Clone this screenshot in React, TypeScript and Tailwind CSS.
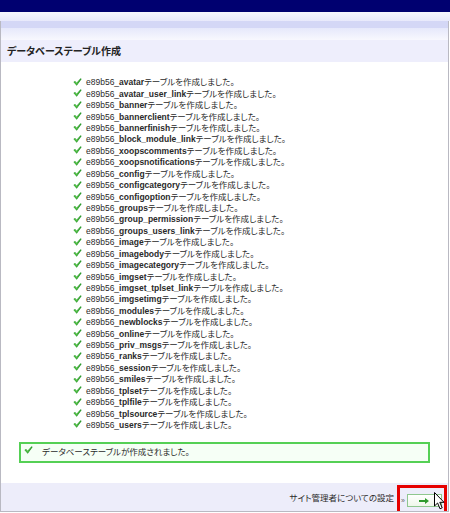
import React from "react";

const tables = [
  "avatar",
  "avatar_user_link",
  "banner",
  "bannerclient",
  "bannerfinish",
  "block_module_link",
  "xoopscomments",
  "xoopsnotifications",
  "config",
  "configcategory",
  "configoption",
  "groups",
  "group_permission",
  "groups_users_link",
  "image",
  "imagebody",
  "imagecategory",
  "imgset",
  "imgset_tplset_link",
  "imgsetimg",
  "modules",
  "newblocks",
  "online",
  "priv_msgs",
  "ranks",
  "session",
  "smiles",
  "tplset",
  "tplfile",
  "tplsource",
  "users",
];

function Check({ className }: { className?: string }) {
  return (
    <svg viewBox="0 0 10 9" className={className}>
      <path d="M0.4 4.4 L2.3 3.3 L3.9 5.4 L8.5 0.3 L9.7 1.1 L4.1 8.6 Z" fill="#27942a" />
      <path d="M1.1 4.6 L2.2 4 L3.9 6.2 L8.7 0.9 L4.1 7.7 Z" fill="#62d04e" />
    </svg>
  );
}

function Cursor() {
  return (
    <svg viewBox="0 0 11 18" className="w-[11px] h-[18px]">
      <path d="M0.5 0.5 L0.5 14 L3.6 11 L6 16.8 L8.2 15.8 L5.8 10.3 L10 10.3 Z" fill="#fff" stroke="#000" strokeWidth="1" />
    </svg>
  );
}

export default function App() {
  return (
    <div className="w-[450px] h-[513px] bg-white overflow-hidden text-[#2a2a2a] font-['Liberation_Sans','Noto_Sans_CJK_JP',sans-serif] [font-feature-settings:'palt']">
      {/* top band */}
      <div className="h-[12px] bg-[#000070]" />
      <div className="h-[9px] bg-gradient-to-b from-[#f6f6fe] to-[#e8e9fb]" />

      <div className="w-[449px] border-l border-r border-b border-[#b9b9c2]">
        <div className="h-[7px] bg-[#d4d7f6]" />
        <div className="h-[12px] bg-gradient-to-b from-[#e6e8fb] to-[#f8f8fe]" />
        <div className="h-[22px] bg-[#eeeefc] flex items-center pl-[6px] text-[10px] font-bold text-[#222]">
          データベーステーブル作成
        </div>

        {/* content */}
        <div className="h-[421px] bg-white pt-[15px]">
          <ul className="ml-[72px] text-[8.5px]">
            {tables.map((t) => (
              <li key={t} className="h-[11.43px] flex items-center whitespace-nowrap">
                <Check className="w-[9px] h-[8px] mr-[4px] -mt-[2px] shrink-0" />
                <span>e89b56_</span>
                <span className="font-bold">{t}</span>
                <span>テーブルを作成しました。</span>
              </li>
            ))}
          </ul>

          <div className="mt-[11px] ml-[18px] w-[411px] h-[21px] border-2 border-[#55d055] bg-[#f6fff6] flex items-center text-[8.5px]">
            <Check className="w-[9px] h-[8px] ml-[3px] mr-[9px] -mt-[5px] shrink-0" />
            <span>データベーステーブルが作成されました。</span>
          </div>
        </div>

        {/* footer */}
        <div className="h-[28px] bg-[#ededfa] flex items-end justify-end pr-[1px] text-[8.5px]">
          <span className="mb-[6px] mr-[3px]">サイト管理者についての設定</span>
          <div className="relative w-[50px] h-[26px] border-[3px] border-b-0 border-[#e60000] flex items-center pl-[1px]">
            <span className="text-[7px] text-[#666] mr-[2px] mt-[3px]">»</span>
            <div className="w-[35px] h-[13px] mt-[2px] border border-[#8fc78f] bg-gradient-to-b from-white to-[#eef7ea] flex items-center justify-center">
              <svg viewBox="0 0 10 6" className="w-[10px] h-[6px]">
                <path d="M0 2 H6 V0 L10 3 L6 6 V4 H0 Z" fill="#2e9a2e" />
              </svg>
            </div>
            <div className="absolute left-[34px] top-[4px]">
              <Cursor />
            </div>
          </div>
        </div>
      </div>
    </div>
  );
}
